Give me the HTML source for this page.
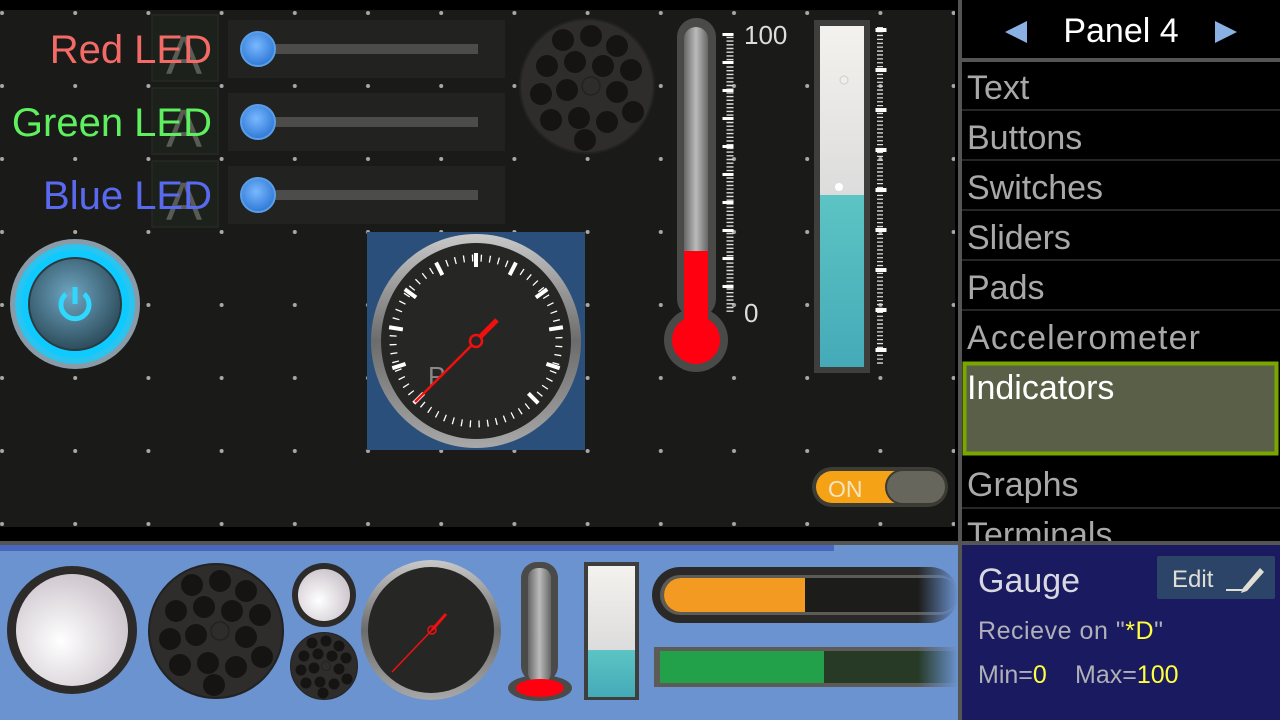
<!DOCTYPE html>
<html><head><meta charset="utf-8"><style>
html,body{margin:0;padding:0;width:1280px;height:720px;overflow:hidden;background:#000}
svg{display:block}
text{font-family:"Liberation Sans",sans-serif}
</style></head><body>
<svg width="1280" height="720" viewBox="0 0 1280 720" xmlns="http://www.w3.org/2000/svg">
<defs>
<pattern id="dots" x="-34.5" y="-23.5" width="73.2" height="73" patternUnits="userSpaceOnUse">
<rect width="73.2" height="73" fill="#1a1b19"/><circle cx="36.5" cy="36.5" r="2" fill="#a8a8a8"/></pattern>
<radialGradient id="pb" cx="45%" cy="40%" r="60%"><stop offset="0" stop-color="#6fa6c2"/><stop offset="1" stop-color="#2d4d5c"/></radialGradient>
<radialGradient id="knob" cx="45%" cy="40%" r="60%"><stop offset="0" stop-color="#7ab8ff"/><stop offset="1" stop-color="#2f79d6"/></radialGradient>
<linearGradient id="bez" x1="0" y1="0" x2="0" y2="1"><stop offset="0" stop-color="#c9c9c9"/><stop offset=".5" stop-color="#6c6c6c"/><stop offset="1" stop-color="#a8a8a8"/></linearGradient>
<linearGradient id="tube" x1="0" y1="0" x2="1" y2="0"><stop offset="0" stop-color="#666"/><stop offset=".5" stop-color="#bbb"/><stop offset="1" stop-color="#666"/></linearGradient>
<linearGradient id="milk" x1="0" y1="0" x2="0" y2="1"><stop offset="0" stop-color="#f4f2ee"/><stop offset="1" stop-color="#dcdcdc"/></linearGradient>
<linearGradient id="teal" x1="0" y1="0" x2="0" y2="1"><stop offset="0" stop-color="#5cc4c4"/><stop offset="1" stop-color="#45aab8"/></linearGradient>
<radialGradient id="led" cx="40%" cy="60%" r="60%"><stop offset="0" stop-color="#ffffff"/><stop offset="1" stop-color="#cfc8cf"/></radialGradient>
<linearGradient id="fade" x1="0" y1="0" x2="1" y2="0"><stop offset="0" stop-color="#6b93d0" stop-opacity="0"/><stop offset="1" stop-color="#6b93d0"/></linearGradient>
<g id="spk">
<circle r="67" fill="#2f2d2b"/><circle r="67" fill="none" stroke="#222" stroke-width="2"/>
<g fill="#151413">
<circle cx="-24" cy="-46" r="11"/><circle cx="4" cy="-50" r="11"/><circle cx="30" cy="-40" r="11"/>
<circle cx="-40" cy="-20" r="11"/><circle cx="-12" cy="-24" r="11"/><circle cx="16" cy="-20" r="11"/><circle cx="44" cy="-16" r="11"/>
<circle cx="-46" cy="8" r="11"/><circle cx="-20" cy="4" r="11"/><circle cx="30" cy="6" r="11"/>
<circle cx="-36" cy="34" r="11"/><circle cx="-8" cy="32" r="11"/><circle cx="20" cy="36" r="11"/><circle cx="46" cy="26" r="11"/>
<circle cx="-2" cy="54" r="11"/></g><circle cx="4" cy="0" r="9" fill="none" stroke="#222" stroke-width="1.5"/></g>
</defs>
<rect width="1280" height="720" fill="#000"/>
<rect x="0" y="10" width="955" height="517" fill="url(#dots)"/>
<g fill="#1c211b" stroke="#242b22" stroke-width="1.5">
<rect x="152" y="15" width="66" height="66"/><rect x="152" y="88" width="66" height="66"/><rect x="152" y="161" width="66" height="66"/></g>
<g fill="#595c55" font-size="54" text-anchor="middle"><text x="184" y="74">A</text><text x="184" y="147">A</text><text x="184" y="220">A</text></g>
<g font-size="40" text-anchor="end"><text x="212" y="63" fill="#f36a66">Red LED</text><text x="212" y="136" fill="#5ef05e">Green LED</text><text x="212" y="209" fill="#5a6af0">Blue LED</text></g>
<g><rect x="228" y="20" width="277" height="58" fill="#222321"/><rect x="228" y="93" width="277" height="58" fill="#222321"/><rect x="228" y="166" width="277" height="58" fill="#222321"/>
<g fill="#4c4d4a"><rect x="262" y="44" width="216" height="10"/><rect x="262" y="117" width="216" height="10"/><rect x="262" y="190" width="216" height="10"/></g>
<g fill="url(#knob)" stroke="#5a9ee8" stroke-width="2"><circle cx="258" cy="49" r="17"/><circle cx="258" cy="122" r="17"/><circle cx="258" cy="195" r="17"/></g></g>
<use href="#spk" x="587" y="86"/>
<circle cx="75" cy="304" r="65" fill="#8a9aa6"/><circle cx="75" cy="304" r="60" fill="#2bc4ee"/><circle cx="75" cy="304" r="54" fill="#0fcaff"/>
<circle cx="75" cy="304" r="46" fill="url(#pb)" stroke="#2b3a40" stroke-width="2"/>
<path d="M66 294 A14 14 0 1 0 84 294" fill="none" stroke="#2fd8ff" stroke-width="5"/><line x1="75" y1="287" x2="75" y2="304" stroke="#2fd8ff" stroke-width="5"/>
<rect x="367" y="232" width="218" height="218" fill="#2a4f7a"/>
<ellipse cx="476" cy="341" rx="105" ry="107" fill="url(#bez)"/><ellipse cx="476" cy="341" rx="95" ry="98" fill="#262624"/>
<g stroke="#fff" stroke-width="4">
<g transform="translate(476 341)">
<line x1="0" y1="-88" x2="0" y2="-74" transform="rotate(-135)"/><line x1="0" y1="-88" x2="0" y2="-74" transform="rotate(-108)"/><line x1="0" y1="-88" x2="0" y2="-74" transform="rotate(-81)"/><line x1="0" y1="-88" x2="0" y2="-74" transform="rotate(-54)"/><line x1="0" y1="-88" x2="0" y2="-74" transform="rotate(-27)"/><line x1="0" y1="-88" x2="0" y2="-74" transform="rotate(0)"/><line x1="0" y1="-88" x2="0" y2="-74" transform="rotate(27)"/><line x1="0" y1="-88" x2="0" y2="-74" transform="rotate(54)"/><line x1="0" y1="-88" x2="0" y2="-74" transform="rotate(81)"/><line x1="0" y1="-88" x2="0" y2="-74" transform="rotate(108)"/><line x1="0" y1="-88" x2="0" y2="-74" transform="rotate(135)"/>
<circle r="83" fill="none" stroke-width="7" stroke-dasharray="1.3 7.4" transform="rotate(135)"/>
</g></g>
<circle cx="476" cy="341" r="74" fill="#262624"/>
<text x="428" y="385" fill="#888" font-size="26">P</text>
<line x1="415" y1="402" x2="476" y2="341" stroke="#f01010" stroke-width="2.5"/><line x1="476" y1="341" x2="497" y2="320" stroke="#f01010" stroke-width="5"/>
<circle cx="476" cy="341" r="6" fill="#262624" stroke="#f01010" stroke-width="2.5"/>
<rect x="677" y="18" width="39" height="300" rx="19" fill="#4a4a48"/><circle cx="696" cy="340" r="32" fill="#4a4a48"/>
<rect x="684" y="27" width="24" height="300" rx="12" fill="url(#tube)"/>
<rect x="684" y="251" width="24" height="80" fill="#ff0010"/><circle cx="696" cy="340" r="24" fill="#ff0010"/>
<line x1="730" y1="33" x2="730" y2="313" stroke="#ddd" stroke-width="7" stroke-dasharray="1.4 2.3"/>
<line x1="728" y1="33" x2="728" y2="313" stroke="#fff" stroke-width="11" stroke-dasharray="3 25"/>
<text x="744" y="44" fill="#ddd" font-size="26">100</text><text x="744" y="322" fill="#ddd" font-size="26">0</text>
<rect x="814" y="20" width="56" height="353" fill="#3e3e3c"/><rect x="820" y="26" width="44" height="170" fill="url(#milk)"/><rect x="820" y="195" width="44" height="172" fill="url(#teal)"/>
<circle cx="839" cy="187" r="4" fill="#fff"/><circle cx="844" cy="80" r="4" fill="#eee" stroke="#ccc"/>
<line x1="880" y1="27" x2="880" y2="366" stroke="#ddd" stroke-width="6" stroke-dasharray="1.3 2.6"/>
<line x1="881" y1="28" x2="881" y2="366" stroke="#fff" stroke-width="11" stroke-dasharray="4 36"/>
<rect x="812" y="467" width="136" height="40" rx="20" fill="#3d3c35"/><rect x="816" y="471" width="128" height="32" rx="16" fill="#f5a216"/>
<rect x="886" y="470" width="60" height="34" rx="17" fill="#66665c" stroke="#3a3a33" stroke-width="2"/>
<text x="828" y="497" fill="#f3e5c0" font-size="23">ON</text>
<rect x="958" y="0" width="4" height="545" fill="#555"/>
<rect x="962" y="58" width="318" height="4" fill="#555"/>
<path d="M1005 32 L1027 21 L1027 43 Z" fill="#8ab0e4"/><path d="M1237 32 L1215 21 L1215 43 Z" fill="#8ab0e4"/>
<text x="1121" y="42" fill="#fff" font-size="34" text-anchor="middle">Panel 4</text>
<g stroke="#333" stroke-width="1.5"><line x1="962" y1="110" x2="1280" y2="110"/><line x1="962" y1="160" x2="1280" y2="160"/><line x1="962" y1="210" x2="1280" y2="210"/><line x1="962" y1="260" x2="1280" y2="260"/><line x1="962" y1="310" x2="1280" y2="310"/><line x1="962" y1="508" x2="1280" y2="508"/></g>
<rect x="964.5" y="363.5" width="312" height="90" fill="#5a6048" stroke="#7aa600" stroke-width="4"/>
<g fill="#a8a8a8" font-size="34"><text x="967" y="99">Text</text><text x="967" y="149">Buttons</text><text x="967" y="199">Switches</text><text x="967" y="249">Sliders</text><text x="967" y="299">Pads</text><text x="967" y="349" textLength="233">Accelerometer</text><text x="967" y="496">Graphs</text><text x="967" y="546">Terminals</text></g>
<text x="967" y="399" fill="#fff" font-size="34">Indicators</text>
<rect x="0" y="541" width="1280" height="4" fill="#555"/>
<rect x="0" y="545" width="958" height="175" fill="#6b93d0"/><rect x="0" y="545" width="834" height="6" fill="#4a67c0"/>
<rect x="958" y="545" width="4" height="175" fill="#555"/>
<rect x="962" y="545" width="318" height="175" fill="#1a1a60"/>
<ellipse cx="72" cy="630" rx="65" ry="64" fill="#2c2b2a"/><ellipse cx="72" cy="630" rx="56" ry="56" fill="url(#led)"/>
<use href="#spk" x="216" y="631"/>
<circle cx="324" cy="595" r="32" fill="#2c2b2a"/><circle cx="324" cy="595" r="26" fill="url(#led)"/>
<g transform="translate(324 666) scale(.5)"><use href="#spk"/></g>
<circle cx="431" cy="630" r="70" fill="url(#bez)"/><circle cx="431" cy="630" r="63" fill="#262624"/>
<line x1="392" y1="672" x2="432" y2="630" stroke="#f01010" stroke-width="1.5"/><line x1="432" y1="630" x2="446" y2="614" stroke="#f01010" stroke-width="3"/><circle cx="432" cy="630" r="4" fill="none" stroke="#f01010" stroke-width="1.5"/>
<rect x="521" y="562" width="37" height="120" rx="16" fill="#4a4a48"/><ellipse cx="540" cy="688" rx="32" ry="13" fill="#4a4a48"/>
<rect x="528" y="568" width="23" height="115" rx="10" fill="url(#tube)"/><ellipse cx="540" cy="688" rx="24" ry="9" fill="#ff0010"/>
<rect x="584" y="562" width="55" height="138" fill="#3e3e3c"/><rect x="588" y="566" width="47" height="85" fill="url(#milk)"/><rect x="588" y="650" width="47" height="47" fill="url(#teal)"/>
<rect x="652" y="567" width="306" height="56" rx="28" fill="#2a2928"/><rect x="660" y="575" width="298" height="40" rx="20" fill="#5c5b56"/>
<rect x="664" y="578" width="294" height="34" rx="17" fill="#1c1c1a"/><rect x="664" y="578" width="141" height="34" rx="17" fill="#f29a22"/><rect x="690" y="578" width="115" height="34" fill="#f29a22"/>
<rect x="654" y="647" width="304" height="40" fill="#5c5b56"/><rect x="660" y="651" width="298" height="32" fill="#263a26"/><rect x="660" y="651" width="164" height="32" fill="#22a04a"/>
<rect x="918" y="560" width="40" height="135" fill="url(#fade)"/>
<text x="978" y="592" fill="#d8d8e0" font-size="34">Gauge</text>
<rect x="1157" y="556" width="118" height="43" rx="2" fill="#2b4468"/>
<text x="1172" y="587" fill="#e0ddd5" font-size="24">Edit</text>
<line x1="1226" y1="590" x2="1246" y2="590" stroke="#e0ddd5" stroke-width="2"/><path d="M1243 588 L1260 568 L1264 572 L1247 591 L1241 593 Z" fill="#e0ddd5"/>
<text x="978" y="639" fill="#b0b0b8" font-size="25" textLength="185">Recieve on "<tspan fill="#ffff40">*D</tspan>"</text>
<text x="978" y="683" fill="#b0b0b8" font-size="25">Min=<tspan fill="#ffff40">0</tspan></text>
<text x="1075" y="683" fill="#b0b0b8" font-size="25">Max=<tspan fill="#ffff40">100</tspan></text>
</svg>
</body></html>
